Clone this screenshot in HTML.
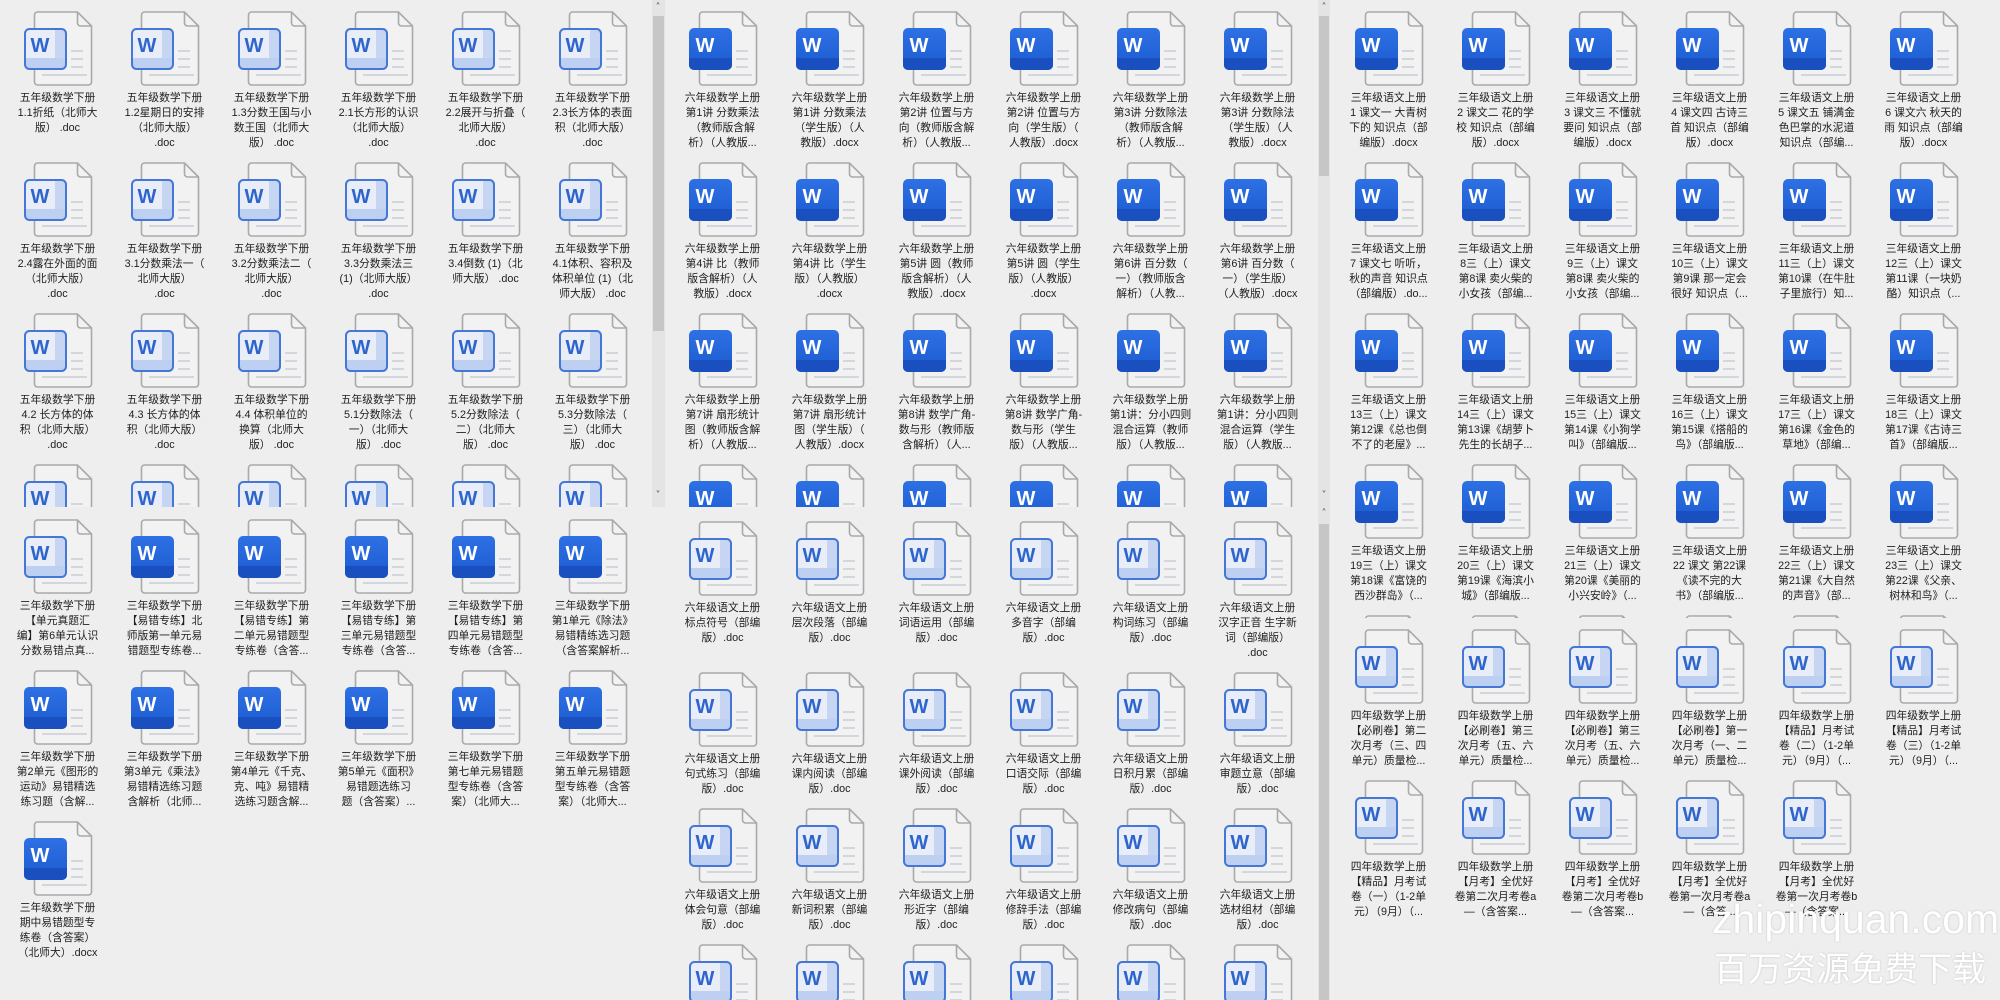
<!DOCTYPE html>
<html><head><meta charset="utf-8">
<style>
*{margin:0;padding:0;box-sizing:border-box}
body{width:2000px;height:1000px;background:#eeeeee;position:relative;overflow:hidden;font-family:"Liberation Sans","Noto Sans CJK SC",sans-serif;}
.p{position:absolute;overflow:hidden;}
.g{display:flex;flex-wrap:wrap;align-items:flex-start;width:642px}
.i{width:107px;text-align:center}
.i svg{display:block;width:107px;height:91px}
.i p{font-size:10.8px;line-height:15px;color:#1e1e1e;white-space:nowrap}
.sb{position:absolute;background:#c6c6c6}
.tr{position:absolute;background:#e4e4e4}
.ar{position:absolute;font-size:10px;color:#555;width:12px;text-align:center;font-family:"DejaVu Sans",sans-serif}
.wm{position:absolute;color:#fff;text-shadow:0 0 2px rgba(0,0,0,.18);white-space:nowrap}
</style></head><body>
<svg width="0" height="0" style="position:absolute">
<defs>
<symbol id="pg" viewBox="0 0 107 91">
<path d="M30.5 15a3 3 0 0 1 3-3h40l14 14v56a3 3 0 0 1-3 3h-51a3 3 0 0 1-3-3z" fill="#f2f2f2" stroke="#a9a9a9" stroke-width="1.6"/>
<path d="M73.5 12v11a3 3 0 0 0 3 3h11" fill="none" stroke="#a9a9a9" stroke-width="1.6"/>
<g stroke="#d3d6dc" stroke-width="2"><line x1="67" y1="51" x2="79" y2="51"/><line x1="67" y1="59" x2="79" y2="59"/><line x1="67" y1="67" x2="79" y2="67"/><line x1="38" y1="75" x2="83" y2="75"/></g>
</symbol>
<linearGradient id="sg" x1="0" y1="0" x2="0" y2="1"><stop offset="0" stop-color="#2e71e4"/><stop offset="1" stop-color="#1c5ad0"/></linearGradient>
<symbol id="s" viewBox="0 0 107 91">
<use href="#pg"/>
<rect x="20" y="28" width="43" height="42" rx="5" fill="url(#sg)"/>
<path d="M20 58h43v7a5 5 0 0 1-5 5h-33a5 5 0 0 1-5-5z" fill="#1a4fbf"/>
<text x="36" y="52" font-family="Liberation Sans,sans-serif" font-weight="bold" font-size="20" fill="#fff" text-anchor="middle">W</text>
</symbol>
<symbol id="o" viewBox="0 0 107 91">
<use href="#pg"/>
<rect x="21" y="29" width="41" height="40" rx="4.5" fill="#e8edf7"/>
<rect x="51" y="30" width="10" height="38" fill="#c6d6f2"/>
<rect x="22" y="58" width="39" height="10" fill="#bed0f1"/>
<rect x="21" y="29" width="41" height="40" rx="4.5" fill="none" stroke="#4477d6" stroke-width="2"/>
<text x="36" y="52" font-family="Liberation Sans,sans-serif" font-weight="bold" font-size="20" fill="#2d65cc" text-anchor="middle">W</text>
</symbol>
</defs></svg>

<!-- top-left -->
<div class="p" style="left:4px;top:0;width:648px;height:507px"><div class="g">
<div class="i"><svg><use href="#o"/></svg><p>五年级数学下册<br>1.1折纸（北师大<br>版） .doc</p></div>
<div class="i"><svg><use href="#o"/></svg><p>五年级数学下册<br>1.2星期日的安排<br>（北师大版）<br>.doc</p></div>
<div class="i"><svg><use href="#o"/></svg><p>五年级数学下册<br>1.3分数王国与小<br>数王国（北师大<br>版） .doc</p></div>
<div class="i"><svg><use href="#o"/></svg><p>五年级数学下册<br>2.1长方形的认识<br>（北师大版）<br>.doc</p></div>
<div class="i"><svg><use href="#o"/></svg><p>五年级数学下册<br>2.2展开与折叠（<br>北师大版）<br>.doc</p></div>
<div class="i"><svg><use href="#o"/></svg><p>五年级数学下册<br>2.3长方体的表面<br>积（北师大版）<br>.doc</p></div>
<div class="i"><svg><use href="#o"/></svg><p>五年级数学下册<br>2.4露在外面的面<br>（北师大版）<br>.doc</p></div>
<div class="i"><svg><use href="#o"/></svg><p>五年级数学下册<br>3.1分数乘法一（<br>北师大版）<br>.doc</p></div>
<div class="i"><svg><use href="#o"/></svg><p>五年级数学下册<br>3.2分数乘法二（<br>北师大版）<br>.doc</p></div>
<div class="i"><svg><use href="#o"/></svg><p>五年级数学下册<br>3.3分数乘法三<br>(1)（北师大版）<br>.doc</p></div>
<div class="i"><svg><use href="#o"/></svg><p>五年级数学下册<br>3.4倒数 (1)（北<br>师大版） .doc</p></div>
<div class="i"><svg><use href="#o"/></svg><p>五年级数学下册<br>4.1体积、容积及<br>体积单位 (1)（北<br>师大版） .doc</p></div>
<div class="i"><svg><use href="#o"/></svg><p>五年级数学下册<br>4.2 长方体的体<br>积（北师大版）<br>.doc</p></div>
<div class="i"><svg><use href="#o"/></svg><p>五年级数学下册<br>4.3 长方体的体<br>积（北师大版）<br>.doc</p></div>
<div class="i"><svg><use href="#o"/></svg><p>五年级数学下册<br>4.4 体积单位的<br>换算（北师大<br>版） .doc</p></div>
<div class="i"><svg><use href="#o"/></svg><p>五年级数学下册<br>5.1分数除法（<br>一）（北师大<br>版） .doc</p></div>
<div class="i"><svg><use href="#o"/></svg><p>五年级数学下册<br>5.2分数除法（<br>二）（北师大<br>版） .doc</p></div>
<div class="i"><svg><use href="#o"/></svg><p>五年级数学下册<br>5.3分数除法（<br>三）（北师大<br>版） .doc</p></div>
<div class="i"><svg><use href="#o"/></svg></div><div class="i"><svg><use href="#o"/></svg></div><div class="i"><svg><use href="#o"/></svg></div><div class="i"><svg><use href="#o"/></svg></div><div class="i"><svg><use href="#o"/></svg></div><div class="i"><svg><use href="#o"/></svg></div>
</div></div>
<div class="tr" style="left:652px;top:0;width:13px;height:507px"></div>
<div class="sb" style="left:653px;top:16px;width:11px;height:315px"></div>
<div class="ar" style="left:652px;top:2px">˄</div>
<div class="ar" style="left:652px;top:490px">˅</div>

<!-- bottom-left -->
<div class="p" style="left:4px;top:508px;width:648px;height:492px"><div class="g">
<div class="i"><svg><use href="#o"/></svg><p>三年级数学下册<br>【单元真题汇<br>编】第6单元认识<br>分数易错点真...</p></div>
<div class="i"><svg><use href="#s"/></svg><p>三年级数学下册<br>【易错专练】北<br>师版第一单元易<br>错题型专练卷...</p></div>
<div class="i"><svg><use href="#s"/></svg><p>三年级数学下册<br>【易错专练】第<br>二单元易错题型<br>专练卷（含答...</p></div>
<div class="i"><svg><use href="#s"/></svg><p>三年级数学下册<br>【易错专练】第<br>三单元易错题型<br>专练卷（含答...</p></div>
<div class="i"><svg><use href="#s"/></svg><p>三年级数学下册<br>【易错专练】第<br>四单元易错题型<br>专练卷（含答...</p></div>
<div class="i"><svg><use href="#s"/></svg><p>三年级数学下册<br>第1单元《除法》<br>易错精练选习题<br>（含答案解析...</p></div>
<div class="i"><svg><use href="#s"/></svg><p>三年级数学下册<br>第2单元《图形的<br>运动》易错精选<br>练习题（含解...</p></div>
<div class="i"><svg><use href="#s"/></svg><p>三年级数学下册<br>第3单元《乘法》<br>易错精选练习题<br>含解析（北师...</p></div>
<div class="i"><svg><use href="#s"/></svg><p>三年级数学下册<br>第4单元《千克、<br>克、吨》易错精<br>选练习题含解...</p></div>
<div class="i"><svg><use href="#s"/></svg><p>三年级数学下册<br>第5单元《面积》<br>易错题选练习<br>题（含答案）...</p></div>
<div class="i"><svg><use href="#s"/></svg><p>三年级数学下册<br>第七单元易错题<br>型专练卷（含答<br>案）（北师大...</p></div>
<div class="i"><svg><use href="#s"/></svg><p>三年级数学下册<br>第五单元易错题<br>型专练卷（含答<br>案）（北师大...</p></div>
<div class="i"><svg><use href="#s"/></svg><p>三年级数学下册<br>期中易错题型专<br>练卷（含答案）<br>（北师大）.docx</p></div>
</div></div>

<!-- middle top -->
<div class="p" style="left:669px;top:0;width:649px;height:507px"><div class="g">
<div class="i"><svg><use href="#s"/></svg><p>六年级数学上册<br>第1讲 分数乘法<br>（教师版含解<br>析）（人教版...</p></div>
<div class="i"><svg><use href="#s"/></svg><p>六年级数学上册<br>第1讲 分数乘法<br>（学生版）（人<br>教版）.docx</p></div>
<div class="i"><svg><use href="#s"/></svg><p>六年级数学上册<br>第2讲 位置与方<br>向（教师版含解<br>析）（人教版...</p></div>
<div class="i"><svg><use href="#s"/></svg><p>六年级数学上册<br>第2讲 位置与方<br>向（学生版）（<br>人教版）.docx</p></div>
<div class="i"><svg><use href="#s"/></svg><p>六年级数学上册<br>第3讲 分数除法<br>（教师版含解<br>析）（人教版...</p></div>
<div class="i"><svg><use href="#s"/></svg><p>六年级数学上册<br>第3讲 分数除法<br>（学生版）（人<br>教版）.docx</p></div>
<div class="i"><svg><use href="#s"/></svg><p>六年级数学上册<br>第4讲 比（教师<br>版含解析）（人<br>教版）.docx</p></div>
<div class="i"><svg><use href="#s"/></svg><p>六年级数学上册<br>第4讲 比（学生<br>版）（人教版）<br>.docx</p></div>
<div class="i"><svg><use href="#s"/></svg><p>六年级数学上册<br>第5讲 圆（教师<br>版含解析）（人<br>教版）.docx</p></div>
<div class="i"><svg><use href="#s"/></svg><p>六年级数学上册<br>第5讲 圆（学生<br>版）（人教版）<br>.docx</p></div>
<div class="i"><svg><use href="#s"/></svg><p>六年级数学上册<br>第6讲 百分数（<br>一）（教师版含<br>解析）（人教...</p></div>
<div class="i"><svg><use href="#s"/></svg><p>六年级数学上册<br>第6讲 百分数（<br>一）（学生版）<br>（人教版）.docx</p></div>
<div class="i"><svg><use href="#s"/></svg><p>六年级数学上册<br>第7讲 扇形统计<br>图（教师版含解<br>析）（人教版...</p></div>
<div class="i"><svg><use href="#s"/></svg><p>六年级数学上册<br>第7讲 扇形统计<br>图（学生版）（<br>人教版）.docx</p></div>
<div class="i"><svg><use href="#s"/></svg><p>六年级数学上册<br>第8讲 数学广角-<br>数与形（教师版<br>含解析）（人...</p></div>
<div class="i"><svg><use href="#s"/></svg><p>六年级数学上册<br>第8讲 数学广角-<br>数与形（学生<br>版）（人教版...</p></div>
<div class="i"><svg><use href="#s"/></svg><p>六年级数学上册<br>第1讲：分小四则<br>混合运算（教师<br>版）（人教版...</p></div>
<div class="i"><svg><use href="#s"/></svg><p>六年级数学上册<br>第1讲：分小四则<br>混合运算（学生<br>版）（人教版...</p></div>
<div class="i"><svg><use href="#s"/></svg></div><div class="i"><svg><use href="#s"/></svg></div><div class="i"><svg><use href="#s"/></svg></div><div class="i"><svg><use href="#s"/></svg></div><div class="i"><svg><use href="#s"/></svg></div><div class="i"><svg><use href="#s"/></svg></div>
</div></div>

<!-- middle bottom -->
<div class="p" style="left:669px;top:510px;width:649px;height:490px"><div class="g">
<div class="i"><svg><use href="#o"/></svg><p>六年级语文上册<br>标点符号（部编<br>版）.doc</p></div>
<div class="i"><svg><use href="#o"/></svg><p>六年级语文上册<br>层次段落（部编<br>版）.doc</p></div>
<div class="i"><svg><use href="#o"/></svg><p>六年级语文上册<br>词语运用（部编<br>版）.doc</p></div>
<div class="i"><svg><use href="#o"/></svg><p>六年级语文上册<br>多音字（部编<br>版）.doc</p></div>
<div class="i"><svg><use href="#o"/></svg><p>六年级语文上册<br>构词练习（部编<br>版）.doc</p></div>
<div class="i"><svg><use href="#o"/></svg><p>六年级语文上册<br>汉字正音 生字新<br>词（部编版）<br>.doc</p></div>
<div class="i"><svg><use href="#o"/></svg><p>六年级语文上册<br>句式练习（部编<br>版）.doc</p></div>
<div class="i"><svg><use href="#o"/></svg><p>六年级语文上册<br>课内阅读（部编<br>版）.doc</p></div>
<div class="i"><svg><use href="#o"/></svg><p>六年级语文上册<br>课外阅读（部编<br>版）.doc</p></div>
<div class="i"><svg><use href="#o"/></svg><p>六年级语文上册<br>口语交际（部编<br>版）.doc</p></div>
<div class="i"><svg><use href="#o"/></svg><p>六年级语文上册<br>日积月累（部编<br>版）.doc</p></div>
<div class="i"><svg><use href="#o"/></svg><p>六年级语文上册<br>审题立意（部编<br>版）.doc</p></div>
<div class="i"><svg><use href="#o"/></svg><p>六年级语文上册<br>体会句意（部编<br>版）.doc</p></div>
<div class="i"><svg><use href="#o"/></svg><p>六年级语文上册<br>新词积累（部编<br>版）.doc</p></div>
<div class="i"><svg><use href="#o"/></svg><p>六年级语文上册<br>形近字（部编<br>版）.doc</p></div>
<div class="i"><svg><use href="#o"/></svg><p>六年级语文上册<br>修辞手法（部编<br>版）.doc</p></div>
<div class="i"><svg><use href="#o"/></svg><p>六年级语文上册<br>修改病句（部编<br>版）.doc</p></div>
<div class="i"><svg><use href="#o"/></svg><p>六年级语文上册<br>选材组材（部编<br>版）.doc</p></div>
<div class="i"><svg><use href="#o"/></svg></div><div class="i"><svg><use href="#o"/></svg></div><div class="i"><svg><use href="#o"/></svg></div><div class="i"><svg><use href="#o"/></svg></div><div class="i"><svg><use href="#o"/></svg></div><div class="i"><svg><use href="#o"/></svg></div>
</div></div>

<div class="tr" style="left:1318px;top:0;width:12px;height:1000px"></div>
<div class="sb" style="left:1319px;top:16px;width:10px;height:160px"></div>
<div class="ar" style="left:1318px;top:2px">˄</div>
<div class="ar" style="left:1318px;top:490px">˅</div>
<div class="ar" style="left:1318px;top:508px">˄</div>
<div class="sb" style="left:1319px;top:524px;width:10px;height:476px"></div>

<!-- right top -->
<div class="p" style="left:1335px;top:0;width:665px;height:618px"><div class="g">
<div class="i"><svg><use href="#s"/></svg><p>三年级语文上册<br>1 课文一 大青树<br>下的 知识点（部<br>编版）.docx</p></div>
<div class="i"><svg><use href="#s"/></svg><p>三年级语文上册<br>2 课文二 花的学<br>校 知识点（部编<br>版）.docx</p></div>
<div class="i"><svg><use href="#s"/></svg><p>三年级语文上册<br>3 课文三 不懂就<br>要问 知识点（部<br>编版）.docx</p></div>
<div class="i"><svg><use href="#s"/></svg><p>三年级语文上册<br>4 课文四 古诗三<br>首 知识点（部编<br>版）.docx</p></div>
<div class="i"><svg><use href="#s"/></svg><p>三年级语文上册<br>5 课文五 铺满金<br>色巴掌的水泥道<br>知识点（部编...</p></div>
<div class="i"><svg><use href="#s"/></svg><p>三年级语文上册<br>6 课文六 秋天的<br>雨 知识点（部编<br>版）.docx</p></div>
<div class="i"><svg><use href="#s"/></svg><p>三年级语文上册<br>7 课文七 听听，<br>秋的声音 知识点<br>（部编版）.do...</p></div>
<div class="i"><svg><use href="#s"/></svg><p>三年级语文上册<br>8三（上）课文<br>第8课 卖火柴的<br>小女孩（部编...</p></div>
<div class="i"><svg><use href="#s"/></svg><p>三年级语文上册<br>9三（上）课文<br>第8课 卖火柴的<br>小女孩（部编...</p></div>
<div class="i"><svg><use href="#s"/></svg><p>三年级语文上册<br>10三（上）课文<br>第9课 那一定会<br>很好 知识点（...</p></div>
<div class="i"><svg><use href="#s"/></svg><p>三年级语文上册<br>11三（上）课文<br>第10课（在牛肚<br>子里旅行）知...</p></div>
<div class="i"><svg><use href="#s"/></svg><p>三年级语文上册<br>12三（上）课文<br>第11课（一块奶<br>酪）知识点（...</p></div>
<div class="i"><svg><use href="#s"/></svg><p>三年级语文上册<br>13三（上）课文<br>第12课《总也倒<br>不了的老屋》...</p></div>
<div class="i"><svg><use href="#s"/></svg><p>三年级语文上册<br>14三（上）课文<br>第13课《胡萝卜<br>先生的长胡子...</p></div>
<div class="i"><svg><use href="#s"/></svg><p>三年级语文上册<br>15三（上）课文<br>第14课《小狗学<br>叫》（部编版...</p></div>
<div class="i"><svg><use href="#s"/></svg><p>三年级语文上册<br>16三（上）课文<br>第15课《搭船的<br>鸟》（部编版...</p></div>
<div class="i"><svg><use href="#s"/></svg><p>三年级语文上册<br>17三（上）课文<br>第16课《金色的<br>草地》（部编...</p></div>
<div class="i"><svg><use href="#s"/></svg><p>三年级语文上册<br>18三（上）课文<br>第17课《古诗三<br>首》（部编版...</p></div>
<div class="i"><svg><use href="#s"/></svg><p>三年级语文上册<br>19三（上）课文<br>第18课《富饶的<br>西沙群岛》（...</p></div>
<div class="i"><svg><use href="#s"/></svg><p>三年级语文上册<br>20三（上）课文<br>第19课《海滨小<br>城》（部编版...</p></div>
<div class="i"><svg><use href="#s"/></svg><p>三年级语文上册<br>21三（上）课文<br>第20课《美丽的<br>小兴安岭》（...</p></div>
<div class="i"><svg><use href="#s"/></svg><p>三年级语文上册<br>22 课文 第22课<br>《读不完的大<br>书》（部编版...</p></div>
<div class="i"><svg><use href="#s"/></svg><p>三年级语文上册<br>22三（上）课文<br>第21课《大自然<br>的声音》（部...</p></div>
<div class="i"><svg><use href="#s"/></svg><p>三年级语文上册<br>23三（上）课文<br>第22课《父亲、<br>树林和鸟》（...</p></div>
<div class="i"><svg><use href="#o"/></svg></div><div class="i"><svg><use href="#o"/></svg></div><div class="i"><svg><use href="#o"/></svg></div><div class="i"><svg><use href="#o"/></svg></div><div class="i"><svg><use href="#o"/></svg></div><div class="i"><svg><use href="#o"/></svg></div>
</div></div>

<!-- right bottom -->
<div class="p" style="left:1335px;top:618px;width:665px;height:382px"><div class="g">
<div class="i"><svg><use href="#o"/></svg><p>四年级数学上册<br>【必刷卷】第二<br>次月考（三、四<br>单元）质量检...</p></div>
<div class="i"><svg><use href="#o"/></svg><p>四年级数学上册<br>【必刷卷】第三<br>次月考（五、六<br>单元）质量检...</p></div>
<div class="i"><svg><use href="#o"/></svg><p>四年级数学上册<br>【必刷卷】第三<br>次月考（五、六<br>单元）质量检...</p></div>
<div class="i"><svg><use href="#o"/></svg><p>四年级数学上册<br>【必刷卷】第一<br>次月考（一、二<br>单元）质量检...</p></div>
<div class="i"><svg><use href="#o"/></svg><p>四年级数学上册<br>【精品】月考试<br>卷（二）（1-2单<br>元）（9月）（...</p></div>
<div class="i"><svg><use href="#o"/></svg><p>四年级数学上册<br>【精品】月考试<br>卷（三）（1-2单<br>元）（9月）（...</p></div>
<div class="i"><svg><use href="#o"/></svg><p>四年级数学上册<br>【精品】月考试<br>卷（一）（1-2单<br>元）（9月）（...</p></div>
<div class="i"><svg><use href="#o"/></svg><p>四年级数学上册<br>【月考】全优好<br>卷第二次月考卷a<br>—（含答案...</p></div>
<div class="i"><svg><use href="#o"/></svg><p>四年级数学上册<br>【月考】全优好<br>卷第二次月考卷b<br>—（含答案...</p></div>
<div class="i"><svg><use href="#o"/></svg><p>四年级数学上册<br>【月考】全优好<br>卷第一次月考卷a<br>—（含答...</p></div>
<div class="i"><svg><use href="#o"/></svg><p>四年级数学上册<br>【月考】全优好<br>卷第一次月考卷b<br>—（含答案...</p></div>
</div></div>

<div class="wm" style="left:1712px;top:896px;font-size:41px;font-family:'Liberation Sans',sans-serif">zhipinquan.com</div>
<div class="wm" style="left:1714px;top:950px;font-size:34px;font-family:'Liberation Sans','Noto Sans CJK SC',sans-serif;line-height:40px">百万资源免费下载</div>
</body></html>
